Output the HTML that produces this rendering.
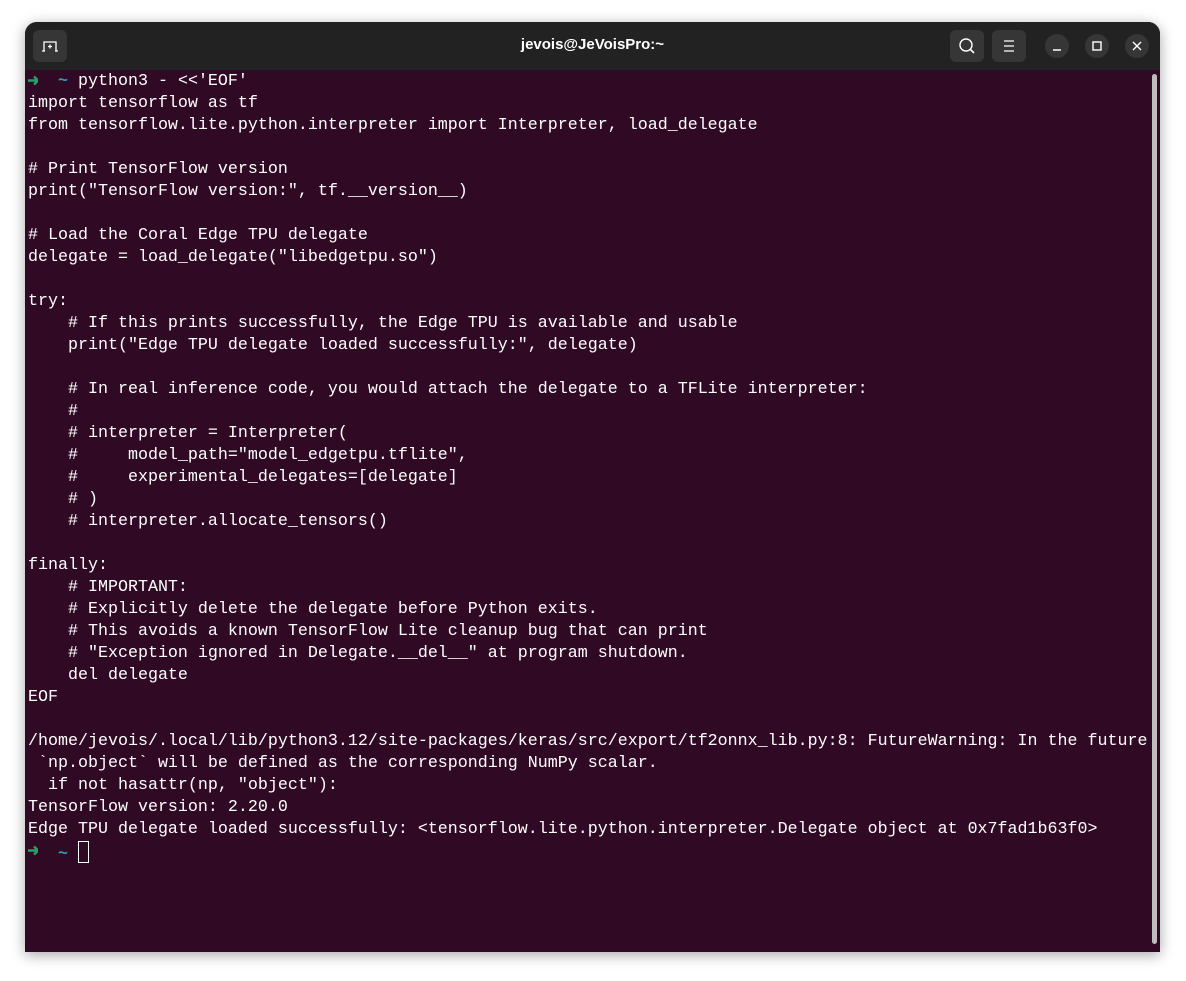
<!DOCTYPE html>
<html><head><meta charset="utf-8"><style>
html,body{margin:0;padding:0;width:1186px;height:981px;background:#fff;overflow:hidden}
.win{position:absolute;left:25px;top:22px;width:1135px;height:930px;border-radius:12px 12px 0 0;overflow:hidden;box-shadow:0 3px 14px rgba(0,0,0,.35);background:#300a24}
.tb{position:absolute;left:0;top:0;width:100%;height:48px;background:#222222}
.title{position:absolute;left:0;right:0;top:14px;text-align:center;color:#fff;font:bold 15px "Liberation Sans",sans-serif}
.btn{position:absolute;top:8px;width:34px;height:32px;border-radius:6px;background:#363636}
.cb{position:absolute;top:12px;width:24px;height:24px;border-radius:50%;background:#363636}
.term{position:absolute;left:3px;top:49px;font:16.66px/22px "Liberation Mono",monospace;color:#fff;white-space:pre}
.g{display:inline-block;width:10px;height:22px;vertical-align:top}.c{color:#2aa1b3;font-weight:bold}
.sb{position:absolute;left:1127px;top:52px;width:5px;height:870px;border-radius:3px;background:#bdbdbd}
.cur{display:inline-block;width:11px;height:22px;border:1.5px solid #fff;box-sizing:border-box;vertical-align:-5px}
</style></head><body>
<div class="win">
<div class="tb">
<div class="btn" style="left:8px"><svg width="34" height="32"><path d="M11 21V12h12v9M15 16.5h4M17 14.5v4" stroke="#fff" stroke-width="1.3" fill="none"/><path d="M9 21h3M22 21h3" stroke="#fff" stroke-width="1.3"/></svg></div>
<div class="title">jevois@JeVoisPro:~</div>
<div class="btn" style="left:925px"><svg width="34" height="32"><circle cx="16" cy="15" r="6" stroke="#fff" stroke-width="1.4" fill="none"/><path d="M20 19l4 4" stroke="#fff" stroke-width="1.6"/></svg></div>
<div class="btn" style="left:967px"><svg width="34" height="32"><path d="M12 11h10M12 16h10M12 21h10" stroke="#fff" stroke-width="1.3"/></svg></div>
<div class="cb" style="left:1020px"><svg width="24" height="24"><path d="M8 16h8" stroke="#fff" stroke-width="1.4"/></svg></div>
<div class="cb" style="left:1060px"><svg width="24" height="24"><rect x="8" y="8" width="8" height="8" stroke="#fff" stroke-width="1.4" fill="none"/></svg></div>
<div class="cb" style="left:1100px"><svg width="24" height="24"><path d="M8 8l8 8M16 8l-8 8" stroke="#fff" stroke-width="1.4"/></svg></div>
</div>
<div class="term"><svg class="g" viewBox="0 0 10 22"><path d="M0 9.5h10M6 5.5l4 4-4 4" stroke="#26a269" stroke-width="2.4" fill="none"/></svg>  <span class="c">~</span> python3 - &lt;&lt;'EOF'
import tensorflow as tf
from tensorflow.lite.python.interpreter import Interpreter, load_delegate

# Print TensorFlow version
print("TensorFlow version:", tf.__version__)

# Load the Coral Edge TPU delegate
delegate = load_delegate("libedgetpu.so")

try:
    # If this prints successfully, the Edge TPU is available and usable
    print("Edge TPU delegate loaded successfully:", delegate)

    # In real inference code, you would attach the delegate to a TFLite interpreter:
    #
    # interpreter = Interpreter(
    #     model_path="model_edgetpu.tflite",
    #     experimental_delegates=[delegate]
    # )
    # interpreter.allocate_tensors()

finally:
    # IMPORTANT:
    # Explicitly delete the delegate before Python exits.
    # This avoids a known TensorFlow Lite cleanup bug that can print
    # "Exception ignored in Delegate.__del__" at program shutdown.
    del delegate
EOF

/home/jevois/.local/lib/python3.12/site-packages/keras/src/export/tf2onnx_lib.py:8: FutureWarning: In the future
 `np.object` will be defined as the corresponding NumPy scalar.
  if not hasattr(np, "object"):
TensorFlow version: 2.20.0
Edge TPU delegate loaded successfully: &lt;tensorflow.lite.python.interpreter.Delegate object at 0x7fad1b63f0&gt;
<svg class="g" viewBox="0 0 10 22"><path d="M0 9.5h10M6 5.5l4 4-4 4" stroke="#26a269" stroke-width="2.4" fill="none"/></svg>  <span class="c">~</span> <span class="cur"></span></div>
<div class="sb"></div>
</div>
</body></html>
